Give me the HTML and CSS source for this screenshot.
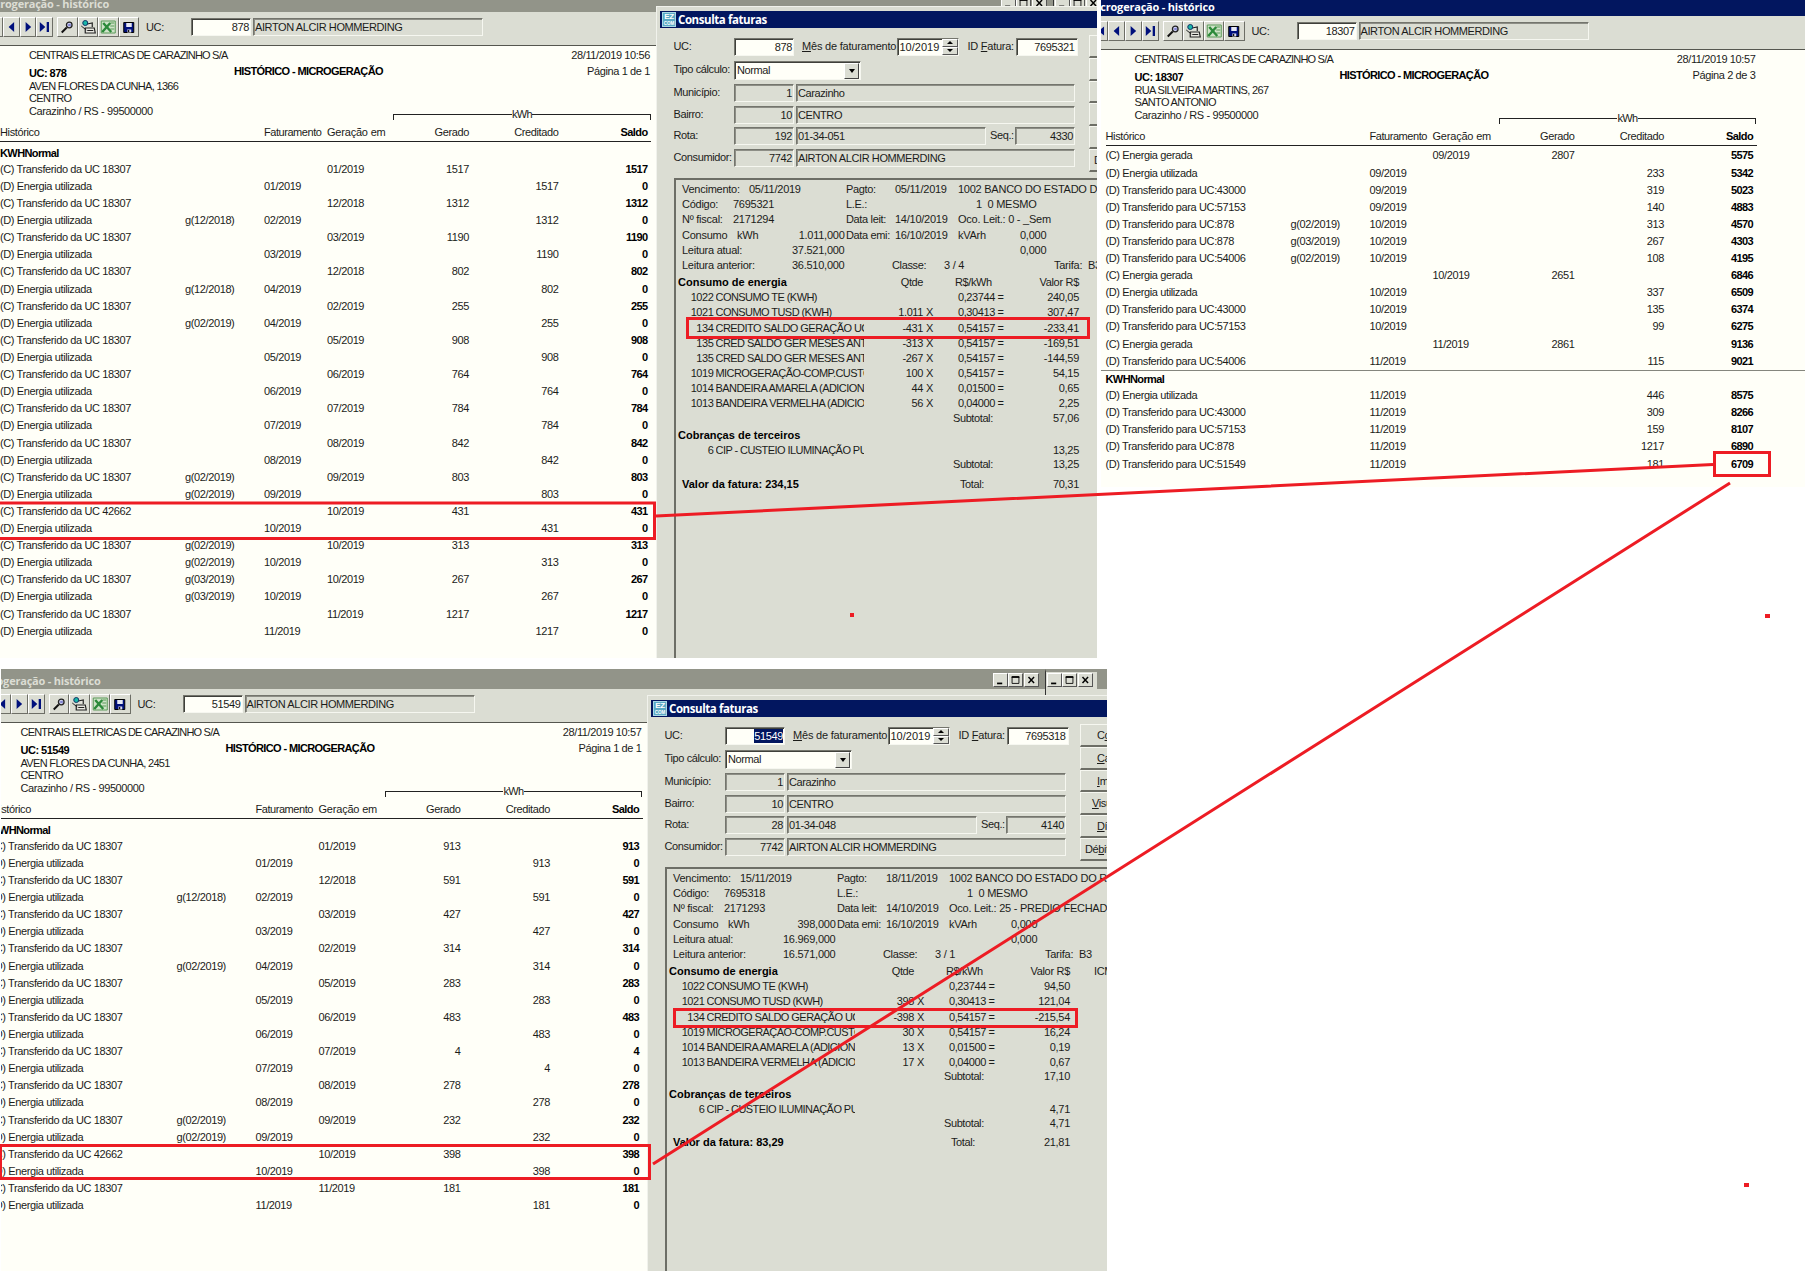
FILE: index.html
```html
<!DOCTYPE html>
<html lang="pt-BR">
<head>
<meta charset="utf-8">
<title>Microgeração - histórico</title>
<link rel="stylesheet" href="styles.css">
</head>
<body>
<svg class="defs" aria-hidden="true">
  <symbol id="i-first" viewBox="0 0 16 16"><path d="M3 3h2v10H3zM12 3v10L6 8z" fill="#00107c"/></symbol>
  <symbol id="i-prev" viewBox="0 0 16 16"><path d="M11 2.500v11L5 8z" fill="#00107c"/></symbol>
  <symbol id="i-next" viewBox="0 0 16 16"><path d="M5 2.500v11L11 8z" fill="#00107c"/></symbol>
  <symbol id="i-last" viewBox="0 0 16 16"><path d="M3 2.500v11L9 8zM10.500 2.500h2.500v11h-2.500z" fill="#00107c"/></symbol>
  <symbol id="i-zoom" viewBox="0 0 16 16"><path d="M2.500 13.500l5-5" stroke="#111" stroke-width="2"/><circle cx="10" cy="6" r="2.800" fill="#c9cdf0" stroke="#222" stroke-width="1.300"/><path d="M9 6h2.500" stroke="#3a3ab0"/></symbol>
  <symbol id="i-print" viewBox="0 0 16 16"><path d="M7 5l5-1v4M5 9h9l1 5H5z" fill="#e8e8e0" stroke="#222" stroke-width="1.200"/><path d="M7 11.500h6M1 7l5 4" stroke="#222"/><circle cx="5" cy="4" r="2.500" fill="#18b8a8" stroke="#136"/></symbol>
  <symbol id="i-xls" viewBox="0 0 16 16"><path d="M1 2h14v12H1z" fill="#cfe3c8" stroke="#5b9a58"/><path d="M10 4h4M10 7h4M10 10h4" stroke="#5b9a58"/><path d="M3 4l8 9M10 4l-8 9" stroke="#2c8a3a" stroke-width="2.400"/></symbol>
  <symbol id="i-save" viewBox="0 0 16 16"><path d="M2.500 3.500h10v10h-10z" fill="#00107c" stroke="#000"/><path d="M5 4h5.500v4H5z" fill="#e6e8f4"/><path d="M6 10.500h4v3H6z" fill="#dde"/><path d="M6.500 11h1.500v2h-1.500z" fill="#111"/></symbol>
  <symbol id="i-min" viewBox="0 0 14 14"><path d="M3 10h6v2H3z"/></symbol>
  <symbol id="i-max" viewBox="0 0 14 14"><path d="M3 3.500h8v7.500H3z" fill="none" stroke="#000"/><path d="M2.500 2.500h9v2h-9z"/></symbol>
  <symbol id="i-close" viewBox="0 0 14 14"><path d="M3.500 3.500l6.500 7M10 3.500l-6.500 7" stroke="#000" stroke-width="1.700"/></symbol>
</svg>

<section class="capture cap-a">
  <div class="history">
    <div class="titlebar"><span>Microgeração - histórico</span></div>
    <div class="winbtns"><svg><use href="#i-min"/></svg><svg><use href="#i-max"/></svg><svg class="x"><use href="#i-close"/></svg></div>
    <div class="winbtns back"><svg><use href="#i-min"/></svg><svg><use href="#i-max"/></svg><svg class="x"><use href="#i-close"/></svg></div>
    <div class="toolbar">
      <div class="btns nav"><svg><use href="#i-first"/></svg><svg><use href="#i-prev"/></svg><svg><use href="#i-next"/></svg><svg><use href="#i-last"/></svg></div>
      <div class="btns"><svg><use href="#i-zoom"/></svg><svg><use href="#i-print"/></svg><svg><use href="#i-xls"/></svg><svg><use href="#i-save"/></svg></div>
      <label>UC:</label><div class="field edit num">878</div><div class="field name">AIRTON ALCIR HOMMERDING</div>
    </div>
    <div class="report">
      <div class="head">
        <div><p class="co">CENTRAIS ELETRICAS DE CARAZINHO S/A</p><p><b>UC: 878</b></p><p>AVEN FLORES DA CUNHA, 1366</p><p>CENTRO</p><p>Carazinho / RS - 99500000</p></div>
        <h1>HISTÓRICO - MICROGERAÇÃO</h1>
        <div class="when"><p>28/11/2019 10:56</p><p>Página 1 de 1</p></div>
      </div>
      <div class="kwh"><i></i><span>kWh</span><i></i></div>
      <table>
        <thead><tr><th>Histórico<th><th>Faturamento<th>Geração em<th>Gerado<th>Creditado<th>Saldo</thead>
        <tbody>
        <tr class="group"><td>KWHNormal
        <tr><td>(C) Transferido da UC 18307<td><td><td>01/2019<td>1517<td><td>1517
        <tr><td>(D) Energia utilizada<td><td>01/2019<td><td><td>1517<td>0
        <tr><td>(C) Transferido da UC 18307<td><td><td>12/2018<td>1312<td><td>1312
        <tr><td>(D) Energia utilizada<td>g(12/2018)<td>02/2019<td><td><td>1312<td>0
        <tr><td>(C) Transferido da UC 18307<td><td><td>03/2019<td>1190<td><td>1190
        <tr><td>(D) Energia utilizada<td><td>03/2019<td><td><td>1190<td>0
        <tr><td>(C) Transferido da UC 18307<td><td><td>12/2018<td>802<td><td>802
        <tr><td>(D) Energia utilizada<td>g(12/2018)<td>04/2019<td><td><td>802<td>0
        <tr><td>(C) Transferido da UC 18307<td><td><td>02/2019<td>255<td><td>255
        <tr><td>(D) Energia utilizada<td>g(02/2019)<td>04/2019<td><td><td>255<td>0
        <tr><td>(C) Transferido da UC 18307<td><td><td>05/2019<td>908<td><td>908
        <tr><td>(D) Energia utilizada<td><td>05/2019<td><td><td>908<td>0
        <tr><td>(C) Transferido da UC 18307<td><td><td>06/2019<td>764<td><td>764
        <tr><td>(D) Energia utilizada<td><td>06/2019<td><td><td>764<td>0
        <tr><td>(C) Transferido da UC 18307<td><td><td>07/2019<td>784<td><td>784
        <tr><td>(D) Energia utilizada<td><td>07/2019<td><td><td>784<td>0
        <tr><td>(C) Transferido da UC 18307<td><td><td>08/2019<td>842<td><td>842
        <tr><td>(D) Energia utilizada<td><td>08/2019<td><td><td>842<td>0
        <tr><td>(C) Transferido da UC 18307<td>g(02/2019)<td><td>09/2019<td>803<td><td>803
        <tr><td>(D) Energia utilizada<td>g(02/2019)<td>09/2019<td><td><td>803<td>0
        <tr><td>(C) Transferido da UC 42662<td><td><td>10/2019<td>431<td><td>431
        <tr><td>(D) Energia utilizada<td><td>10/2019<td><td><td>431<td>0
        <tr><td>(C) Transferido da UC 18307<td>g(02/2019)<td><td>10/2019<td>313<td><td>313
        <tr><td>(D) Energia utilizada<td>g(02/2019)<td>10/2019<td><td><td>313<td>0
        <tr><td>(C) Transferido da UC 18307<td>g(03/2019)<td><td>10/2019<td>267<td><td>267
        <tr><td>(D) Energia utilizada<td>g(03/2019)<td>10/2019<td><td><td>267<td>0
        <tr><td>(C) Transferido da UC 18307<td><td><td>11/2019<td>1217<td><td>1217
        <tr><td>(D) Energia utilizada<td><td>11/2019<td><td><td>1217<td>0
        </tbody>
      </table>
    </div>
  </div>

  <div class="dialog">
    <div class="caption"><span class="logo"><b>EZ</b><b>COM</b></span><span>Consulta faturas</span></div>
    <div class="content">
      <div class="form">
        <div class="line first"><label>UC:</label><div class="field edit num">878</div><label class="mes"><u>M</u>ês de faturamento:</label><div class="field edit spin"><span>10/2019</span><i><b></b><b></b></i></div><label class="idf">ID <u>F</u>atura:</label><div class="field edit id">7695321</div></div>
        <div class="line tipo"><label>Tipo cálculo:</label><div class="field edit combo"><span>Normal</span><i></i></div></div>
        <div class="line"><label>Município:</label><div class="field num">1</div><div class="field wide">Carazinho</div></div>
        <div class="line"><label>Bairro:</label><div class="field num">10</div><div class="field wide">CENTRO</div></div>
        <div class="line"><label>Rota:</label><div class="field num">192</div><div class="field rota">01-34-051</div><label class="seq">Seq.:</label><div class="field num seqn">4330</div></div>
        <div class="line"><label>Consumidor:</label><div class="field num">7742</div><div class="field wide">AIRTON ALCIR HOMMERDING</div></div>
      </div>
      <div class="side"><div></div><div></div><div></div><div></div><div></div><div class="deb">D</div></div>
    </div>
    <div class="bill">
      <div class="info"><span>Vencimento:</span><span class="p16">05/11/2019</span><span>Pagto:</span><span>05/11/2019</span><span>1002 BANCO DO ESTADO DO</span></div>
      <div class="info"><span>Código:</span><span>7695321</span><span>L.E.:</span><span></span><span class="p18">1&nbsp; 0 MESMO</span></div>
      <div class="info"><span>Nº fiscal:</span><span>2171294</span><span>Data leit:</span><span>14/10/2019</span><span>Oco. Leit.: 0 - _Sem</span></div>
      <div class="info"><span>Consumo</span><span class="split"><em>kWh</em><em>1.011,000</em></span><span>Data emi:</span><span>16/10/2019</span><span class="kv"><em>kVArh</em><em>0,000</em></span></div>
      <div class="info"><span>Leitura atual:</span><span class="r">37.521,000</span><span></span><span></span><span class="p62">0,000</span></div>
      <div class="info"><span>Leitura anterior:</span><span class="r">36.510,000</span><span class="p44">Classe:</span><span class="p49">3 / 4</span><span class="tar"><em>Tarifa:</em><em>B3</em></span></div>
      <div class="item sec"><strong>Consumo de energia</strong><span class="q">Qtde</span><span class="pr">R$/kWh</span><span class="v">Valor R$</span></div>
      <div class="item"><span class="k">1022</span><span class="n">CONSUMO TE (KWH)</span><span class="pr">0,23744 =</span><span class="v">240,05</span></div>
      <div class="item"><span class="k">1021</span><span class="n">CONSUMO TUSD (KWH)</span><span class="q">1.011</span><span class="x">X</span><span class="pr">0,30413 =</span><span class="v">307,47</span></div>
      <div class="item"><span class="k">134</span><span class="n">CREDITO SALDO GERAÇÃO UC</span><span class="q">-431</span><span class="x">X</span><span class="pr">0,54157 =</span><span class="v">-233,41</span></div>
      <div class="item"><span class="k">135</span><span class="n">CRED SALDO GER MESES ANT</span><span class="q">-313</span><span class="x">X</span><span class="pr">0,54157 =</span><span class="v">-169,51</span></div>
      <div class="item"><span class="k">135</span><span class="n">CRED SALDO GER MESES ANT</span><span class="q">-267</span><span class="x">X</span><span class="pr">0,54157 =</span><span class="v">-144,59</span></div>
      <div class="item"><span class="k">1019</span><span class="n">MICROGERAÇÃO-COMP.CUSTO</span><span class="q">100</span><span class="x">X</span><span class="pr">0,54157 =</span><span class="v">54,15</span></div>
      <div class="item"><span class="k">1014</span><span class="n">BANDEIRA AMARELA (ADICION</span><span class="q">44</span><span class="x">X</span><span class="pr">0,01500 =</span><span class="v">0,65</span></div>
      <div class="item"><span class="k">1013</span><span class="n">BANDEIRA VERMELHA (ADICIO</span><span class="q">56</span><span class="x">X</span><span class="pr">0,04000 =</span><span class="v">2,25</span></div>
      <div class="item sub"><span class="pr">Subtotal:</span><span class="v">57,06</span></div>
      <div class="item sec"><strong>Cobranças de terceiros</strong></div>
      <div class="item"><span class="k">6</span><span class="n">CIP - CUSTEIO ILUMINAÇÃO PU</span><span class="v">13,25</span></div>
      <div class="item sub"><span class="pr">Subtotal:</span><span class="v">13,25</span></div>
      <div class="item total"><strong>Valor da fatura: 234,15</strong><span class="pr">Total:</span><span class="v">70,31</span></div>
    </div>
  </div>
</section>

<section class="capture cap-b">
  <div class="history active">
    <div class="titlebar"><span>Microgeração - histórico</span></div>
    <div class="toolbar">
      <div class="btns nav"><svg><use href="#i-first"/></svg><svg><use href="#i-prev"/></svg><svg><use href="#i-next"/></svg><svg><use href="#i-last"/></svg></div>
      <div class="btns"><svg><use href="#i-zoom"/></svg><svg><use href="#i-print"/></svg><svg><use href="#i-xls"/></svg><svg><use href="#i-save"/></svg></div>
      <label>UC:</label><div class="field edit num">18307</div><div class="field name">AIRTON ALCIR HOMMERDING</div>
    </div>
    <div class="report">
      <div class="head">
        <div><p class="co">CENTRAIS ELETRICAS DE CARAZINHO S/A</p><p><b>UC: 18307</b></p><p>RUA SILVEIRA MARTINS, 267</p><p>SANTO ANTONIO</p><p>Carazinho / RS - 99500000</p></div>
        <h1>HISTÓRICO - MICROGERAÇÃO</h1>
        <div class="when"><p>28/11/2019 10:57</p><p>Página 2 de 3</p></div>
      </div>
      <div class="kwh"><i></i><span>kWh</span><i></i></div>
      <table>
        <thead><tr><th>Histórico<th><th>Faturamento<th>Geração em<th>Gerado<th>Creditado<th>Saldo</thead>
        <tbody class="cont">
        <tr><td>(C) Energia gerada<td><td><td>09/2019<td>2807<td><td>5575
        <tr><td>(D) Energia utilizada<td><td>09/2019<td><td><td>233<td>5342
        <tr><td>(D) Transferido para UC:43000<td><td>09/2019<td><td><td>319<td>5023
        <tr><td>(D) Transferido para UC:57153<td><td>09/2019<td><td><td>140<td>4883
        <tr><td>(D) Transferido para UC:878<td>g(02/2019)<td>10/2019<td><td><td>313<td>4570
        <tr><td>(D) Transferido para UC:878<td>g(03/2019)<td>10/2019<td><td><td>267<td>4303
        <tr><td>(D) Transferido para UC:54006<td>g(02/2019)<td>10/2019<td><td><td>108<td>4195
        <tr><td>(C) Energia gerada<td><td><td>10/2019<td>2651<td><td>6846
        <tr><td>(D) Energia utilizada<td><td>10/2019<td><td><td>337<td>6509
        <tr><td>(D) Transferido para UC:43000<td><td>10/2019<td><td><td>135<td>6374
        <tr><td>(D) Transferido para UC:57153<td><td>10/2019<td><td><td>99<td>6275
        <tr><td>(C) Energia gerada<td><td><td>11/2019<td>2861<td><td>9136
        <tr><td>(D) Transferido para UC:54006<td><td>11/2019<td><td><td>115<td>9021
        </tbody>
        <tbody class="next">
        <tr class="group"><td>KWHNormal
        <tr><td>(D) Energia utilizada<td><td>11/2019<td><td><td>446<td>8575
        <tr><td>(D) Transferido para UC:43000<td><td>11/2019<td><td><td>309<td>8266
        <tr><td>(D) Transferido para UC:57153<td><td>11/2019<td><td><td>159<td>8107
        <tr><td>(D) Transferido para UC:878<td><td>11/2019<td><td><td>1217<td>6890
        <tr><td>(D) Transferido para UC:51549<td><td>11/2019<td><td><td>181<td>6709
        </tbody>
      </table>
    </div>
  </div>
</section>

<section class="capture cap-c">
  <div class="history">
    <div class="titlebar"><span>Microgeração - histórico</span></div>
    <div class="winbtns"><svg><use href="#i-min"/></svg><svg><use href="#i-max"/></svg><svg class="x"><use href="#i-close"/></svg></div>
    <div class="winbtns back"><svg><use href="#i-min"/></svg><svg><use href="#i-max"/></svg><svg class="x"><use href="#i-close"/></svg></div>
    <div class="toolbar">
      <div class="btns nav"><svg><use href="#i-first"/></svg><svg><use href="#i-prev"/></svg><svg><use href="#i-next"/></svg><svg><use href="#i-last"/></svg></div>
      <div class="btns"><svg><use href="#i-zoom"/></svg><svg><use href="#i-print"/></svg><svg><use href="#i-xls"/></svg><svg><use href="#i-save"/></svg></div>
      <label>UC:</label><div class="field edit num">51549</div><div class="field name">AIRTON ALCIR HOMMERDING</div>
    </div>
    <div class="report">
      <div class="head">
        <div><p class="co">CENTRAIS ELETRICAS DE CARAZINHO S/A</p><p><b>UC: 51549</b></p><p>AVEN FLORES DA CUNHA, 2451</p><p>CENTRO</p><p>Carazinho / RS - 99500000</p></div>
        <h1>HISTÓRICO - MICROGERAÇÃO</h1>
        <div class="when"><p>28/11/2019 10:57</p><p>Página 1 de 1</p></div>
      </div>
      <div class="kwh"><i></i><span>kWh</span><i></i></div>
      <table>
        <thead><tr><th>Histórico<th><th>Faturamento<th>Geração em<th>Gerado<th>Creditado<th>Saldo</thead>
        <tbody>
        <tr class="group"><td>KWHNormal
        <tr><td>(C) Transferido da UC 18307<td><td><td>01/2019<td>913<td><td>913
        <tr><td>(D) Energia utilizada<td><td>01/2019<td><td><td>913<td>0
        <tr><td>(C) Transferido da UC 18307<td><td><td>12/2018<td>591<td><td>591
        <tr><td>(D) Energia utilizada<td>g(12/2018)<td>02/2019<td><td><td>591<td>0
        <tr><td>(C) Transferido da UC 18307<td><td><td>03/2019<td>427<td><td>427
        <tr><td>(D) Energia utilizada<td><td>03/2019<td><td><td>427<td>0
        <tr><td>(C) Transferido da UC 18307<td><td><td>02/2019<td>314<td><td>314
        <tr><td>(D) Energia utilizada<td>g(02/2019)<td>04/2019<td><td><td>314<td>0
        <tr><td>(C) Transferido da UC 18307<td><td><td>05/2019<td>283<td><td>283
        <tr><td>(D) Energia utilizada<td><td>05/2019<td><td><td>283<td>0
        <tr><td>(C) Transferido da UC 18307<td><td><td>06/2019<td>483<td><td>483
        <tr><td>(D) Energia utilizada<td><td>06/2019<td><td><td>483<td>0
        <tr><td>(C) Transferido da UC 18307<td><td><td>07/2019<td>4<td><td>4
        <tr><td>(D) Energia utilizada<td><td>07/2019<td><td><td>4<td>0
        <tr><td>(C) Transferido da UC 18307<td><td><td>08/2019<td>278<td><td>278
        <tr><td>(D) Energia utilizada<td><td>08/2019<td><td><td>278<td>0
        <tr><td>(C) Transferido da UC 18307<td>g(02/2019)<td><td>09/2019<td>232<td><td>232
        <tr><td>(D) Energia utilizada<td>g(02/2019)<td>09/2019<td><td><td>232<td>0
        <tr><td>(C) Transferido da UC 42662<td><td><td>10/2019<td>398<td><td>398
        <tr><td>(D) Energia utilizada<td><td>10/2019<td><td><td>398<td>0
        <tr><td>(C) Transferido da UC 18307<td><td><td>11/2019<td>181<td><td>181
        <tr><td>(D) Energia utilizada<td><td>11/2019<td><td><td>181<td>0
        </tbody>
      </table>
    </div>
  </div>

  <div class="dialog">
    <div class="caption"><span class="logo"><b>EZ</b><b>COM</b></span><span>Consulta faturas</span></div>
    <div class="content">
      <div class="form">
        <div class="line first"><label>UC:</label><div class="field edit num"><mark>51549</mark></div><label class="mes"><u>M</u>ês de faturamento:</label><div class="field edit spin"><span>10/2019</span><i><b></b><b></b></i></div><label class="idf">ID <u>F</u>atura:</label><div class="field edit id">7695318</div></div>
        <div class="line tipo"><label>Tipo cálculo:</label><div class="field edit combo"><span>Normal</span><i></i></div></div>
        <div class="line"><label>Município:</label><div class="field num">1</div><div class="field wide">Carazinho</div></div>
        <div class="line"><label>Bairro:</label><div class="field num">10</div><div class="field wide">CENTRO</div></div>
        <div class="line"><label>Rota:</label><div class="field num">28</div><div class="field rota">01-34-048</div><label class="seq">Seq.:</label><div class="field num seqn">4140</div></div>
        <div class="line"><label>Consumidor:</label><div class="field num">7742</div><div class="field wide">AIRTON ALCIR HOMMERDING</div></div>
      </div>
      <div class="side"><div>C<u>o</u></div><div><u>C</u>a</div><div><u>I</u>m</div><div class="vis"><u>V</u>isu</div><div><u>D</u>í</div><div class="deb">Dé<u>b</u>it</div></div>
    </div>
    <div class="bill">
      <div class="info"><span>Vencimento:</span><span class="p16">15/11/2019</span><span>Pagto:</span><span>18/11/2019</span><span>1002 BANCO DO ESTADO DO RI</span></div>
      <div class="info"><span>Código:</span><span>7695318</span><span>L.E.:</span><span></span><span class="p18">1&nbsp; 0 MESMO</span></div>
      <div class="info"><span>Nº fiscal:</span><span>2171293</span><span>Data leit:</span><span>14/10/2019</span><span>Oco. Leit.: 25 - PREDIO FECHADO</span></div>
      <div class="info"><span>Consumo</span><span class="split"><em>kWh</em><em>398,000</em></span><span>Data emi:</span><span>16/10/2019</span><span class="kv"><em>kVArh</em><em>0,000</em></span></div>
      <div class="info"><span>Leitura atual:</span><span class="r">16.969,000</span><span></span><span></span><span class="p62">0,000</span></div>
      <div class="info"><span>Leitura anterior:</span><span class="r">16.571,000</span><span class="p44">Classe:</span><span class="p49">3 / 1</span><span class="tar"><em>Tarifa:</em><em>B3</em></span></div>
      <div class="item sec"><strong>Consumo de energia</strong><span class="q">Qtde</span><span class="pr">R$/kWh</span><span class="v">Valor R$</span><span class="icm">ICM</span></div>
      <div class="item"><span class="k">1022</span><span class="n">CONSUMO TE (KWH)</span><span class="pr">0,23744 =</span><span class="v">94,50</span></div>
      <div class="item"><span class="k">1021</span><span class="n">CONSUMO TUSD (KWH)</span><span class="q">398</span><span class="x">X</span><span class="pr">0,30413 =</span><span class="v">121,04</span></div>
      <div class="item"><span class="k">134</span><span class="n">CREDITO SALDO GERAÇÃO UC</span><span class="q">-398</span><span class="x">X</span><span class="pr">0,54157 =</span><span class="v">-215,54</span></div>
      <div class="item"><span class="k">1019</span><span class="n">MICROGERAÇÃO-COMP.CUSTO</span><span class="q">30</span><span class="x">X</span><span class="pr">0,54157 =</span><span class="v">16,24</span></div>
      <div class="item"><span class="k">1014</span><span class="n">BANDEIRA AMARELA (ADICION</span><span class="q">13</span><span class="x">X</span><span class="pr">0,01500 =</span><span class="v">0,19</span></div>
      <div class="item"><span class="k">1013</span><span class="n">BANDEIRA VERMELHA (ADICIO</span><span class="q">17</span><span class="x">X</span><span class="pr">0,04000 =</span><span class="v">0,67</span></div>
      <div class="item sub"><span class="pr">Subtotal:</span><span class="v">17,10</span></div>
      <div class="item sec"><strong>Cobranças de terceiros</strong></div>
      <div class="item"><span class="k">6</span><span class="n">CIP - CUSTEIO ILUMINAÇÃO PU</span><span class="v">4,71</span></div>
      <div class="item sub"><span class="pr">Subtotal:</span><span class="v">4,71</span></div>
      <div class="item total"><strong>Valor da fatura: 83,29</strong><span class="pr">Total:</span><span class="v">21,81</span></div>
    </div>
  </div>
</section>

<!-- red annotations across the three windows -->
<svg class="marks" viewBox="0 0 1805 1271" fill="none" stroke="#ed1c24" stroke-width="3">
  <path d="M-3 503H654.500V538.500H-3z"/>
  <path d="M687.500 318.500H1088.500V337.500H687.500z"/>
  <path d="M1714.500 452.500H1769.500V475.500H1714.500z"/>
  <path d="M.500 1145.500H649.500V1178.500H.500z"/>
  <path d="M674.500 1009.500H1076.500V1026.500H674.500z"/>
  <path d="M656 516L1713 464.500M653 1164L1730 483"/>
  <path fill="#ed1c24" stroke="none" d="M850 613h4v4h-4zM1765 614h5v4h-5zM1744 1183h5v4h-5z"/>
</svg>
</body>
</html>
```
FILE: styles.css
```css
* { box-sizing: border-box; }
body, p, h1 { margin: 0; }
body {
  position: relative;
  width: 1805px;
  height: 1271px;
  overflow: hidden;
  background: #fff;
  color: #1c1c1a;
  font: 11px/12px "Liberation Sans", Arial, sans-serif;
  letter-spacing: -.38px;
  white-space: nowrap;
}
i, em { font-style: normal; }
.defs { position: absolute; width: 0; height: 0; }
.marks { position: absolute; left: 0; top: 0; width: 1805px; height: 1271px; }

/* captures on the canvas */
.capture { position: absolute; overflow: hidden; background: #dbddd3; }
.cap-a { left: 0; top: 0; width: 1097px; height: 658px; }
.cap-b { left: 1101px; top: 0; width: 704px; height: 487px; }
.cap-c { left: 1px; top: 669px; width: 1105.5px; height: 602px; }
.history { position: absolute; width: 1130px; height: 700px; --page: 656px; }
.cap-a .history { left: 0; top: -8px; }
.cap-b .history { left: 4.5px; top: -4px; --page: 705px; }
.cap-c .history { left: -9.5px; top: 0; }

.titlebar {
  height: 20px;
  margin-left: -10px;
  padding-left: 10px;
  background: #929489;
  color: #dcddd4;
  font: bold 11px/23px "Open Sans", "Noto Sans", sans-serif;
  letter-spacing: -.2px;
}
.titlebar span { display: flex; justify-content: flex-end; width: 109px; }
.active .titlebar { background: #02165f; color: #fff; line-height: 21px; }
.winbtns { position: absolute; left: 1001px; top: 4px; display: flex; }
.winbtns.back { left: 1053px; height: 27px; top: 0; padding: 1px 4px 0 1px; border-left: 1px solid #333; border-top: 3px solid #929489; background: #dbddd3; }
.winbtns svg { width: 15px; height: 14px; background: #dbddd3; border: 1px solid; border-color: #fff #555 #555 #fff; }
.winbtns .x { margin-left: 1px; }

/* toolbar */
.toolbar {
  display: flex;
  align-items: center;
  width: calc(var(--page) + 14px);
  height: 34px;
  margin-left: -14px;
  padding-bottom: 3px;
  border-bottom: 1px solid #55564f;
  background: #dbddd3;
}
.btns { display: flex; margin-right: 4px; }
.btns svg {
  width: 20.500px;
  height: 20px;
  padding: 1px;
  border: 1px solid;
  border-color: #fff #6d6e66 #6d6e66 #fff;
}
.btns.nav svg { width: 16.75px; padding: 0; }
.toolbar label { width: 48px; padding-left: 3px; }
.field {
  height: 18px;
  padding: 0 2px;
  border: 1px solid;
  border-color: #74756d #f6f7f0 #f6f7f0 #74756d;
  box-shadow: inset 1px 1px #8d8e86;
  line-height: 17px;
}
.edit { background: #fffff8; box-shadow: inset 1px 1px #3f403b; }
.num { text-align: right; padding-right: 1px; }
.toolbar .num { width: 60px; margin-right: 2px; }
.toolbar .name { width: 230px; padding-left: 1px; letter-spacing: -.4px; }

/* printed report */
.report { width: calc(var(--page) + 10px); height: 620px; margin-left: -10px; padding-left: 10px; background: #fffff8; }
.head { display: grid; grid-template-columns: 205px 1fr auto; width: 650px; height: 62px; padding: 3px 0 0 29px; }
.head p { line-height: 12.67px; height: 12.67px; }
.head .co { height: 18px; line-height: 12px; letter-spacing: -.81px; }
.head p:nth-child(3), .head p:nth-child(4) { letter-spacing: -.67px; }
.head b { letter-spacing: -.5px; color: #000; }
.head h1 { font-size: 11px; line-height: 12px; padding-top: 16px; letter-spacing: -.62px; color: #000; }
.when { text-align: right; }
.when p { height: 16px; line-height: 12px; }
.kwh { display: flex; justify-content: space-between; width: 258px; height: 12px; margin-left: 393px; }
.kwh i { width: 119px; height: 6px; margin-top: 6px; border-top: 1px solid #222; }
.kwh i:first-child { border-left: 1px solid #222; }
.kwh i:last-child { border-right: 1px solid #222; }
.kwh span { letter-spacing: -.6px; }
table, thead, tbody { display: block; }
thead { width: 651px; height: 22px; padding-top: 6px; border-bottom: 1px solid #222; }
tr { display: grid; grid-template-columns: 185px 79px 63px 62px 80px 89.5px 89px; height: 17.11px; line-height: 17.11px; }
thead tr { height: 12px; line-height: 12px; }
th, td { padding: 0; text-align: left; font-weight: normal; }
th:nth-child(n+5), td:nth-child(n+5) { text-align: right; }
th:nth-child(4) { letter-spacing: -.2px; }
th:nth-child(3) { letter-spacing: -.45px; }
th:nth-child(7), td:nth-child(7), .group { font-weight: bold; letter-spacing: -.6px; color: #000; }
.group { height: 18.750px; padding-top: 5px; line-height: 12px; }
.group td { font-weight: bold; }
.cont { padding-top: 1.4px; }
.next { width: 715px; margin-left: -10px; padding-left: 10px; border-top: 1px solid #85867e; }
.next .group { height: 16.3px; padding-top: 2.5px; }

/* Consulta faturas dialog */
.dialog { position: absolute; width: 520px; height: 700px; padding: 4px 0 0 3px; background: #dbddd3; border: solid #f1f2ec; border-width: 1px 0 0 1px; }
.cap-a .dialog { left: 656px; top: 6px; }
.cap-c .dialog { left: 646px; top: 26px; }
.caption { display: flex; align-items: center; height: 17px; padding-left: 2px; background: #02165f; color: #fff; font: bold 11.5px/17px "Open Sans", "Noto Sans", sans-serif; letter-spacing: -.42px; }
.logo { display: flex; flex-direction: column; align-items: center; width: 14px; height: 15px; margin-right: 2px; background: #5aa9c4; border: 1px solid #a9d9e6; font: bold 8px/8px "Liberation Sans", sans-serif; letter-spacing: -.3px; }
.logo b + b { font-size: 4.5px; line-height: 5px; letter-spacing: 0; }
.content { display: flex; justify-content: space-between; height: 150px; padding: 7px 0 0 13.5px; }
.form { width: 410px; padding-top: 2.5px; }
.line { display: flex; align-items: flex-start; height: 21.7px; line-height: 16px; }
.line > label:first-child { width: 60.5px; }
.line .num { width: 60px; margin-right: 2px; }
.field.wide { width: 279px; padding-left: 1px; letter-spacing: -.4px; }
.line.first { height: 23.5px; }
.mes { width: 100.5px; padding-left: 6px; letter-spacing: -.3px; }
.line .num + .mes { letter-spacing: -.2px; }
.spin { display: flex; justify-content: space-between; width: 62px; padding: 0 0 0 2px; letter-spacing: 0; }
.spin i { display: flex; flex-direction: column; width: 16px; background: #dbddd3; }
.spin b { display: flex; justify-content: center; align-items: center; height: 8px; border: 1px solid; border-color: #fff #555 #555 #fff; }
.spin b::after, .combo i::after { content: ""; border: solid transparent; border-width: 0 3px 3px; border-bottom-color: #000; }
.spin b + b::after { border-width: 3px 3px 0; border-top-color: #000; }
.idf { width: 57px; padding-left: 9px; letter-spacing: -.25px; }
.field.id { width: 62px; text-align: right; }
.line.tipo { height: 23px; }
.field.combo { display: flex; justify-content: space-between; align-items: center; width: 127px; height: 19px; padding-right: 1px; }
.combo i { display: flex; justify-content: center; align-items: center; width: 15px; height: 16px; background: #dbddd3; border: 1px solid; border-color: #fff #444 #444 #fff; }
.combo i::after { border-width: 4px 3.5px 0; border-top-color: #000; }
.field.rota { width: 190px; padding-left: 1px; }
.seq { width: 29px; padding-left: 4px; }
.line .num.seqn { width: 60px; margin: 0; }
mark { background: #02165f; color: #fff; padding: 1px 0; }
.side { width: 90px; margin-right: -3px; }
.side div { height: 22.75px; padding-left: 16px; line-height: 20px; border: solid; border-width: 1px 0 2px 1px; border-color: #f6f7f0 #6d6e66 #6d6e66 #f6f7f0; }
.side .vis { padding-left: 11px; }
.side .deb { padding-left: 4px; }

.bill { height: 500px; margin-left: 14px; padding: 2px 0 0 6px; border: solid #6d6e66; border-width: 2px 0 0 2px; }
.info { display: grid; grid-template-columns: 51px 111.5px 50.5px 63px 1fr; height: 15.2px; line-height: 15.2px; letter-spacing: -.25px; }
.info > :nth-child(3) { margin-left: 1.5px; letter-spacing: -.35px; }
.p16 { padding-left: 16px; }
.p18 { padding-left: 18px; }
.p44 { padding-left: 46px; }
.p49 { padding-left: 49px; }
.p62 { padding-left: 62px; }
.r { text-align: right; }
.split { display: flex; justify-content: space-between; padding-left: 4px; }
.kv, .tar { display: grid; grid-template-columns: 62px auto; }
.tar { grid-template-columns: 34px auto; padding-left: 96px; }
/* columns: code, name, quantity, x, price, value, tax */
.item { display: grid; grid-template-columns: 31.5px 2px 148.5px 59px 35px 121px 1fr; height: 15.2px; line-height: 15.2px; letter-spacing: -.4px; }
.item > * { grid-row: 1; }
.item strong { grid-column: 1 / 4; color: #000; letter-spacing: 0; }
.item .k { grid-column: 1; text-align: right; }
.item .n { grid-column: 3; overflow: hidden; letter-spacing: -.56px; }
.item .q { grid-column: 4; text-align: right; }
.item .x { grid-column: 5; padding-left: 3px; }
.item .pr { grid-column: 6; }
.item .v { grid-column: 6; text-align: right; letter-spacing: -.3px; }
.item .icm { grid-column: 7; padding-left: 24px; }
.item.sec { height: 16px; line-height: 17px; margin-top: 1px; }
.item.sec strong { margin-left: -4px; }
.item.sec .pr { margin-left: -3px; }
.item.sub { height: 14.500px; line-height: 13.500px; }
.item.sub .pr { margin-left: -5px; }
.item.total { height: 19px; line-height: 22px; }
.item.total .pr { padding-left: 2px; }
```
